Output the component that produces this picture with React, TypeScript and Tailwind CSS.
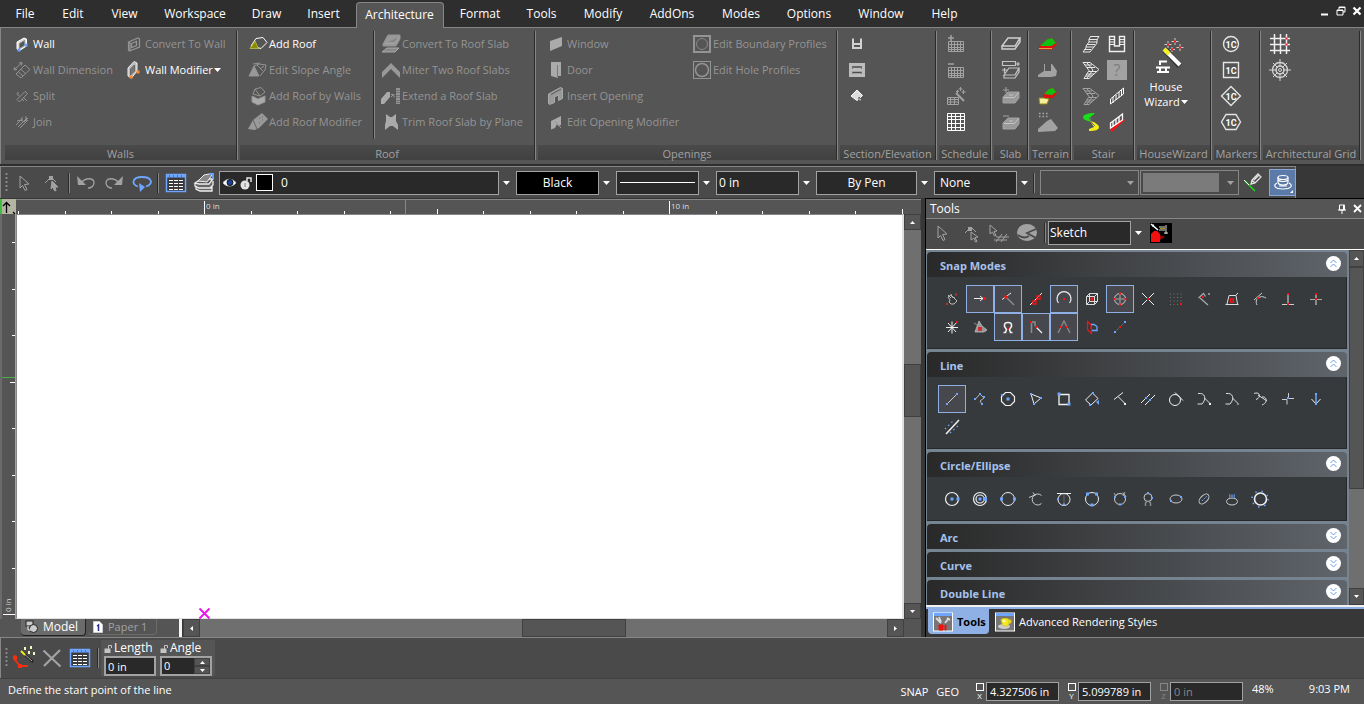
import type { ReactNode } from 'react';

const RED = '#ff1010';
const BLUE = '#6ea6ff';

type IconProps = { size?: number; box?: number; className?: string; children?: ReactNode };

const Icon = ({ size = 20, box = 20, className = '', children }: IconProps) => (
  <svg
    width={size}
    height={size}
    viewBox={`0 0 ${box} ${box}`}
    fill="none"
    stroke="currentColor"
    className={`shrink-0 ${className}`}
    aria-hidden="true"
  >
    {children}
  </svg>
);

const Dot = ({ x, y, c = RED, s = 2 }: { x: number; y: number; c?: string; s?: number }) => (
  <rect x={x - s / 2} y={y - s / 2} width={s} height={s} fill={c} stroke="none" />
);

const Caret = ({ className = 'text-white' }: { className?: string }) => (
  <svg width="7" height="4" viewBox="0 0 7 4" className={`shrink-0 ${className}`} aria-hidden="true">
    <path d="M0 0h7L3.5 4z" fill="currentColor" />
  </svg>
);

/* ---------- menu bar ---------- */

const menus = [
  { label: 'File', width: 'w-[50px]' },
  { label: 'Edit', width: 'w-[46px]' },
  { label: 'View', width: 'w-[57px]' },
  { label: 'Workspace', width: 'w-[84px]' },
  { label: 'Draw', width: 'w-[59px]' },
  { label: 'Insert', width: 'w-[55px]' },
  { label: 'Architecture', width: 'w-[97px]', active: true },
  { label: 'Format', width: 'w-[64px]' },
  { label: 'Tools', width: 'w-[59px]' },
  { label: 'Modify', width: 'w-[64px]' },
  { label: 'AddOns', width: 'w-[74px]' },
  { label: 'Modes', width: 'w-[64px]' },
  { label: 'Options', width: 'w-[72px]' },
  { label: 'Window', width: 'w-[72px]' },
  { label: 'Help', width: 'w-[55px]' },
];

const MenuBar = () => (
  <header className="flex h-[27px] bg-[#2e2e2e]">
    <nav className="flex">
      {menus.map((m) => (
        <div key={m.label} className={`flex shrink-0 justify-center ${m.width}`}>
          {m.active ? (
            <button className="relative mt-0.5 h-[26px] w-[88px] rounded-t-sm border border-b-0 border-[#868686] bg-[#555555] pb-0.5">
              {m.label}
            </button>
          ) : (
            <button className="h-full">{m.label}</button>
          )}
        </div>
      ))}
    </nav>
    <div className="ml-auto flex items-start gap-1.5 pt-1.5 pr-0.5 text-white">
      <button aria-label="Minimize">
        <Icon size={10} box={10}><path d="M1 8.5h7" strokeWidth="2" /></Icon>
      </button>
      <button aria-label="Restore">
        <Icon size={10} box={10}><path d="M3 3.5V1h6v5H7M1 4h6v5H1zM3 1.5h6M1 4.5h6" /></Icon>
      </button>
      <button aria-label="Close">
        <Icon size={10} box={10}><path d="M1.5 1.5l7 7M8.5 1.5l-7 7" strokeWidth="2.2" /></Icon>
      </button>
    </div>
  </header>
);

/* ---------- ribbon ---------- */

const wallIcons = {
  wall: (
    <Icon>
      <path d="M5 8l7-4 2.5 1v7l-7 4.5L5 15z" fill="#ddd" stroke="#fff" />
      <path d="M7.5 9.5l5-3v5l-5 3z" fill="#555" stroke="#888" />
      <Dot x={7} y={16} c={BLUE} s={3} /><Dot x={14} y={11} c={BLUE} s={3} />
    </Icon>
  ),
  dimension: (
    <Icon><path d="M2 10l8-7.5M2 10l3-.5M2 10l.5-3M10 2.5l-3 .5M10 2.5l-.5 3M4 14l9-9 5 4.5-9 8.5zM6.5 12l4.5 4M9 9.5l4.5 4" /></Icon>
  ),
  split: (
    <Icon><path d="M5 13.500l8-8 2.500 2-8 8.500zM4.500 8l3 2M5 6.500l2 1M12 12l3 3M10 13l2 2" /></Icon>
  ),
  join: (
    <Icon><path d="M4 13l6-6M6 15l9-9M8 16l8-8M5 9l4-1 3 2 4-4M10 5v4M14 4v5" /></Icon>
  ),
  convert: (
    <Icon><path d="M4.500 8l9.500-4 1.500 1v8l-10 4-1-1zM7.500 9.500l5-2v4l-5 2zM5 8l1 1v8" strokeWidth="1.200" /></Icon>
  ),
  modifier: (
    <Icon>
      <path d="M4 8l6-6.5 3 1.5v8L7.5 18 4 16z" fill="#bbb" stroke="#eee" />
      <path d="M6.5 9l4-4v6l-4 4z" fill="#777" stroke="#666" />
      <Dot x={7} y={17} c="#ff8a2a" s={3} /><Dot x={14} y={12} c="#ff8a2a" s={3} />
    </Icon>
  ),
};

const roofIcons = {
  add: (
    <Icon>
      <path d="M3 12L8 4.500l7-1 4 5-6 6z" stroke="#fff" />
      <path d="M2 14.500L7 7l3.500 7.500z" fill="#8b8b00" stroke="#d8d860" strokeWidth=".6" />
    </Icon>
  ),
  slope: (
    <Icon>
      <path d="M1 16L6 6l5 10z" fill="#999" />
      <path d="M6 6l5-2 7 1-1 5-5 6M9 5l6 6M12 9l4-3M5 4l7-1" />
    </Icon>
  ),
  walls: (
    <Icon>
      <path d="M4 10l6 3 7-3v6l-7 3-6-3z" fill="#aaa" />
      <path d="M5 8l2-5 6-1.5 4 4.5-5 4zM7 3l5 7" />
    </Icon>
  ),
  modifier: (
    <Icon>
      <path d="M0 17L5 8l9-7 6 6-9 9-4 2z" fill="#999" stroke="none" />
      <path d="M5 8l4 9M11 6h1m2 2h1m-4 3h1m2-6h1" stroke="#666" />
    </Icon>
  ),
  slab: (
    <Icon>
      <path d="M2 10L7 1h12v4l-4 7H2z" fill="#999" />
      <path d="M4 9h10l4-6M1 18l5-4h12l-4 4z" fill="#888" stroke="#aaa" />
    </Icon>
  ),
  miter: <Icon><path d="M1 12L10 3l9 9v6l-9-9-9 9z" fill="#999" stroke="none" /></Icon>,
  extend: (
    <Icon>
      <path d="M0 18v-5l6-7h3v5l-6 7z" fill="#aaa" stroke="none" />
      <path d="M10 8.500h3v3M10 11l2-2" />
      <path d="M17 2v16" strokeWidth="4" strokeDasharray="2 .5" />
    </Icon>
  ),
  trim: <Icon><path d="M5 2l4 3h2l4-3v7l2 4v5l-5-4h-3l-5 4v-5l1-4z" fill="#aaa" stroke="none" /></Icon>,
};

const openingIcons = {
  window: <Icon><path d="M4 7l12-4v9L4 17z" fill="#aaa" stroke="none" /></Icon>,
  door: <Icon><path d="M5 2h10v14h-3v2l-7-2z" fill="#aaa" stroke="none" /><path d="M11.5 5v12" stroke="#777" /></Icon>,
  insert: (
    <Icon>
      <path d="M2.500 8l12-6.500 2 1v10l-4 2V9l-4 2v5.500l-5 2-1-1z" fill="#999" stroke="#aaa" />
      <path d="M5 8.500l10-5.500" stroke="#555" />
    </Icon>
  ),
  edit: <Icon><path d="M5 9l10-5v9l-3 1-1-2-2 4-4 1.500z" fill="#aaa" stroke="none" /><path d="M9 9l6 7" stroke="#999" /></Icon>,
  boundary: <Icon><rect x="2" y="2" width="16" height="16" strokeWidth="2" /><circle cx="10" cy="10" r="5.5" strokeWidth=".8" /></Icon>,
  hole: <Icon><rect x="1.5" y="1.5" width="17" height="17" /><circle cx="10" cy="10" r="6.5" strokeWidth="1.5" /></Icon>,
};

const ToolItem = ({ icon, label, on, menu }: { icon: ReactNode; label: string; on?: boolean; menu?: boolean }) => (
  <button
    disabled={!on}
    className={`flex h-[26px] items-center gap-px whitespace-nowrap ${on ? 'text-white' : 'text-[#949494]'}`}
  >
    {icon}
    <span>{label}</span>
    {menu && <Caret />}
  </button>
);

const Group = ({ title, className, children }: { title: string; className: string; children: ReactNode }) => (
  <section className={`flex shrink-0 flex-col border-r border-[#868686] ${className}`}>
    <div className="flex flex-1 border-r border-[#2a2a2a]">{children}</div>
    <h2 className="ml-0.5 h-[15px] border-r border-[#2a2a2a] bg-linear-to-b from-[#4a4a4a] to-[#414141] text-center leading-[17px] whitespace-nowrap text-[#a2a2a2]">
      {title}
    </h2>
  </section>
);

const IconColumn = ({ icons }: { icons: { name: string; art: ReactNode }[] }) => (
  <div className="flex flex-col">
    {icons.map((i) => (
      <button key={i.name} aria-label={i.name} className="flex h-[26px] items-center">
        {i.art}
      </button>
    ))}
  </div>
);

const scheduleGrid = 'M2.500 7.500h15v10h-15zM2 10.500h16M2 13.500h16M2 15.500h16M5.500 7v11M8.500 7v11M11.500 7v11M14.500 7v11';

const sectionIcons = [
  { name: 'Section', art: <Icon className="text-[#d2d2d2]"><path d="M6 4.5V14h8V4.500M6 10h8" strokeWidth="2" /></Icon> },
  {
    name: 'Elevation',
    art: (
      <Icon>
        <rect x="2" y="3" width="16" height="14" fill="#bcbcbc" stroke="none" />
        <path d="M5 7h10M5 12.500h10" stroke="#4b4b4b" strokeWidth="1.500" />
        <path d="M5.500 7v2M14.500 7v2M5.500 12v2M14.500 12v2" stroke="#777" />
      </Icon>
    ),
  },
  { name: 'Update Section', art: <Icon><path d="M4 10l6-6 5.500 5.500-5.500 5z" fill="#ddd" stroke="#fff" /><path d="M12 11v4l3-.5z" fill="#fff" stroke="#555" /></Icon> },
];

const scheduleIcons = [
  { name: 'Add Schedule', art: <Icon className="text-[#a2a2a2]"><path d={scheduleGrid} /><path d="M5 1v6M2 4h6" strokeWidth="1.5" /></Icon> },
  { name: 'Remove Schedule', art: <Icon className="text-[#a2a2a2]"><path d={scheduleGrid} /><path d="M2 4h6" strokeWidth="1.5" /></Icon> },
  {
    name: 'Schedule Wizard',
    art: (
      <Icon className="text-[#a2a2a2]">
        <path d="M1.5 11.5h11v7h-11zM1.5 13.5h11M1.5 16h11M4.5 11v7M8.500 11v7M14.500 1v4M12.500 3h4M17.500 4v4M15.500 6h4M11.500 4v3M10 5.500h3" />
        <path d="M10 7l8 8" strokeWidth="2" />
      </Icon>
    ),
  },
  {
    name: 'Schedule Table',
    art: <Icon className="text-white"><path d="M1.5 1.5h17v17h-17zM1.5 4.5h17M1.5 7.500h17M1.5 11.5h17M1.5 15.500h17M5.5 1.5v17M9.500 1.5v17M14.5 1.5v17" /></Icon>,
  },
];

const slabIcons = [
  { name: 'Slab', art: <Icon className="text-[#d0d0d0]"><path d="M1 12l6-8h12l-5 8zM1 12v3h13l5-7V4" strokeWidth="1.400" /></Icon> },
  {
    name: 'Add Slab',
    art: <Icon className="text-[#c4c4c4]"><path d="M1.500 1.500h13v4h-13zM15 4h4M17 2v4M1 10h5M3.500 8v5M3 15l5-7h10l-4 7zM3 15v3h11l4-6V8" strokeWidth="1.200" /></Icon>,
  },
  { name: 'Add to Slab', art: <Icon className="text-[#a2a2a2]"><path d="M2 11l5-5h11v6l-4 5H2z" fill="#999" /><path d="M5 1v6M2 4h6" /><path d="M3 11.500h10.500l4-5M8 9h4" stroke="#c4c4c4" /></Icon> },
  { name: 'Subtract from Slab', art: <Icon className="text-[#a2a2a2]"><path d="M2 11l5-5h11v6l-4 5H2z" fill="#999" /><path d="M2 4h6" /><path d="M3 11.500h10.500l4-5M8 9h4" stroke="#c4c4c4" /></Icon> },
];

const terrainIcons = [
  {
    name: 'Terrain',
    art: (
      <Icon>
        <path d="M1 12.500l8-7 5-1.500 5 6-5 5.500H1z" fill="#e01010" stroke="none" />
        <path d="M2 12l7-6.500 5-1.500 4 5-4.500 3z" fill="#10c010" stroke="none" />
        <path d="M1 14.500h13" stroke="#e0a040" />
      </Icon>
    ),
  },
  { name: 'Terrain Pad', art: <Icon><path d="M0 15l6-4V4h1v7h6V4h1l5 7-1 5-5 1H0z" fill="#a2a2a2" stroke="none" /></Icon> },
  {
    name: 'Terrain Modify',
    art: (
      <Icon>
        <path d="M5 8.500L11 3l4-1 4 5-4 5H5z" fill="#e01010" stroke="none" />
        <path d="M6 8l5-5 4-1 3 4-4 3z" fill="#10c010" stroke="none" />
        <path d="M1 12h5l5 1-2 5H1.500z" fill="#f6ee9a" stroke="#8f8418" />
      </Icon>
    ),
  },
  {
    name: 'Terrain Points',
    art: <Icon><path d="M0 20v-3l9-8 4-2 7 9-3 3z" fill="#a2a2a2" stroke="none" /><path d="M1 1.5h9M1 4.5h9" stroke="#aaa" strokeDasharray="1.5 2" strokeWidth="1.5" /></Icon>,
  },
];

const landing = 'M2 2.500h7l9 7-10 9H3l5-8zM4 5h7M6 7.500h8M8 11.500h8M6 14h7M5 16h6M6 3l6 7-6 8';

const stairLeft = [
  {
    name: 'Straight Stair',
    art: <Icon className="text-[#e8e8e8]"><path d="M10 2.500h8M8 5.500h8M8 8h8M6 10.500h8M5 13h8M3 15.500h7M2 18h7M10 2L8 5v3l-3 4v2l-3 4M18 2l-2 4v3l-3 4-4 5" /></Icon>,
  },
  { name: 'L Stair', art: <Icon className="text-[#e8e8e8]"><path d={landing} /></Icon> },
  { name: 'Stair with Landing', art: <Icon className="text-[#a2a2a2]"><path d={landing} /></Icon> },
  {
    name: 'Spiral Stair',
    art: (
      <Icon>
        <path d="M14 1C8 1 3 2 2 5c0 3 5 4 8 5L8 6l4-3z" fill="#18e018" stroke="none" />
        <path d="M9 9c5 1 9 4 9 6 0 3-4 4-10 4v-2l5-2-2-3z" fill="#f2ee18" stroke="none" />
        <path d="M9 5l1 5 4 4" stroke="#777" />
      </Icon>
    ),
  },
];

const stairRight = [
  {
    name: 'U Stair',
    art: <Icon className="text-[#f0f0f0]"><path d="M2.500 2.500h5v9.500h5V2.500h5v15h-15z" strokeWidth="1.400" /><path d="M2 5.500h5M2 8h5M2 10.500h5M12.500 5.500h5M12.500 8h5M12.500 10.500h5" /></Icon>,
  },
  { name: 'Stair Help', art: <span className="flex size-5 items-center justify-center bg-[#a2a2a2] text-base text-[#7d7d7d]">?</span> },
  { name: 'Railing', art: <Icon className="text-white"><path d="M3.5 18v-5l13-11v6zM6 17v-6M9 14V9M12 12V6M14.5 10V4" /></Icon> },
  {
    name: 'Rail on Stair',
    art: <Icon className="text-white"><path d="M4 19L17 7" stroke={RED} strokeWidth="2.5" /><path d="M3.500 16v-5l12-9v6zM6 14V9M9 12V7M12 10V4" strokeWidth="1.300" /></Icon>,
  },
];

const Marker = ({ d }: { d: string }) => (
  <Icon size={22} box={22} className="font-['Roboto',sans-serif] text-[#e4e4e4]">
    <path d={d} strokeWidth="1.4" />
    <text x="11" y="14.5" textAnchor="middle" fontSize="9" fontWeight="bold" fill="#fff" stroke="none">1C</text>
  </Icon>
);

const markerIcons = [
  { name: 'Circle marker', art: <Marker d="M3.500 11a7.500 7.500 0 1 0 15 0a7.500 7.500 0 1 0-15 0" /> },
  { name: 'Square marker', art: <Marker d="M3.5 3.5h15v15h-15z" /> },
  { name: 'Diamond marker', art: <Marker d="M11 1.5l9.5 9.5-9.5 9.5L1.5 11z" /> },
  { name: 'Hexagon marker', art: <Marker d="M6 3.5h10l4.5 7.5-4.5 7.5H6L1.5 11z" /> },
];

const gridIcons = [
  {
    name: 'Rectangular grid',
    art: (
      <Icon size={22} box={22} className="text-[#f0f0f0]">
        <path d="M5.5 1v20M11.500 1v20M17.500 1v20M1 5.5h20M1 11.500h20M1 17.500h20" strokeWidth="1.500" />
        <Dot x={17.5} y={5.5} />
        <Dot x={17.5} y={11.5} />
      </Icon>
    ),
  },
  {
    name: 'Radial grid',
    art: (
      <Icon size={22} box={22} className="text-[#d4d4d4]">
        <circle cx="11" cy="11" r="7.5" strokeWidth="1.3" />
        <circle cx="11" cy="11" r="4" strokeWidth="1.4" />
        <circle cx="11" cy="11" r="1.500" />
        <path d="M11 0v8M11 14v8M0 11h8M14 11h8M4 4l5 5M18 4l-5 5M4 18l5-5M18 18l-5-5" />
      </Icon>
    ),
  },
];

const Ribbon = () => (
  <div className="flex h-[137px] shrink-0 overflow-hidden border-t border-l border-[#868686] bg-[#555555] pt-[3px] pb-1 pl-0.5 text-[11px]">
    <Group title="Walls" className="w-[235px]">
      <div className="w-[112px] pl-[9px]">
        <ToolItem icon={wallIcons.wall} label="Wall" on />
        <ToolItem icon={wallIcons.dimension} label="Wall Dimension" />
        <ToolItem icon={wallIcons.split} label="Split" />
        <ToolItem icon={wallIcons.join} label="Join" />
      </div>
      <div className="pl-[9px]">
        <ToolItem icon={wallIcons.convert} label="Convert To Wall" />
        <ToolItem icon={wallIcons.modifier} label="Wall Modifier" on menu />
      </div>
    </Group>
    <Group title="Roof" className="w-[298px]">
      <div className="mb-1.5 w-[136px] border-r border-[#2a2a2a] pl-[10px]">
        <ToolItem icon={roofIcons.add} label="Add Roof" on />
        <ToolItem icon={roofIcons.slope} label="Edit Slope Angle" />
        <ToolItem icon={roofIcons.walls} label="Add Roof by Walls" />
        <ToolItem icon={roofIcons.modifier} label="Add Roof Modifier" />
      </div>
      <div className="mb-1.5 border-l border-[#868686] pl-[6px]">
        <ToolItem icon={roofIcons.slab} label="Convert To Roof Slab" />
        <ToolItem icon={roofIcons.miter} label="Miter Two Roof Slabs" />
        <ToolItem icon={roofIcons.extend} label="Extend a Roof Slab" />
        <ToolItem icon={roofIcons.trim} label="Trim Roof Slab by Plane" />
      </div>
    </Group>
    <Group title="Openings" className="w-[302px]">
      <div className="w-[146px] pl-[10px]">
        <ToolItem icon={openingIcons.window} label="Window" />
        <ToolItem icon={openingIcons.door} label="Door" />
        <ToolItem icon={openingIcons.insert} label="Insert Opening" />
        <ToolItem icon={openingIcons.edit} label="Edit Opening Modifier" />
      </div>
      <div className="pl-[10px]">
        <ToolItem icon={openingIcons.boundary} label="Edit Boundary Profiles" />
        <ToolItem icon={openingIcons.hole} label="Edit Hole Profiles" />
      </div>
    </Group>
    <Group title="Section/Elevation" className="w-[99px]">
      <div className="pl-[9px]"><IconColumn icons={sectionIcons} /></div>
    </Group>
    <Group title="Schedule" className="w-[55px]">
      <div className="pl-[9px]"><IconColumn icons={scheduleIcons} /></div>
    </Group>
    <Group title="Slab" className="w-[37px]">
      <div className="pl-[9px]"><IconColumn icons={slabIcons} /></div>
    </Group>
    <Group title="Terrain" className="w-[43px]">
      <div className="pl-[9px]"><IconColumn icons={terrainIcons} /></div>
    </Group>
    <Group title="Stair" className="w-[63px]">
      <div className="flex gap-1.5 pl-[9px]">
        <IconColumn icons={stairLeft} />
        <IconColumn icons={stairRight} />
      </div>
    </Group>
    <Group title="HouseWizard" className="w-[77px]">
      <button className="flex h-[80px] w-[62px] flex-col items-center text-white">
        <Icon size={44} box={44} className="mt-1 ml-2">
          <path d="M17 15l15 16" stroke="#333" strokeWidth="6" />
          <path d="M17 15l15 15" stroke="#fff" strokeWidth="4" />
          <path d="M16 14l5 5" stroke="#f4f020" strokeWidth="4" />
          <path d="M11 26.500h8M8 32.500h14M12 26v4M9 37h12M12 32v5M18 32v5" stroke="#fff" strokeWidth="2" />
          <path d="M20 6v7M16.500 9.500h7M27 3v7M23.500 6.500h7M32 9v7M28.500 12.500h7M24 12v5M22 14.500h5" stroke="#ccc" />
          <Dot x={20} y={9.5} /><Dot x={27} y={6.5} /><Dot x={32} y={12.5} /><Dot x={24} y={14.5} />
        </Icon>
        <span className="flex flex-col items-center leading-[15px]">
          <span>House</span>
          <span className="flex items-center gap-px">Wizard<Caret /></span>
        </span>
      </button>
    </Group>
    <Group title="Markers" className="w-[49px]">
      <div className="pl-[8px]"><IconColumn icons={markerIcons} /></div>
    </Group>
    <Group title="Architectural Grid" className="w-[100px]">
      <div className="pl-[8px]"><IconColumn icons={gridIcons} /></div>
    </Group>
  </div>
);

/* ---------- property toolbar ---------- */

const pointer = 'M6 3l9 8-4.5.5 2.5 5-2 1-2.5-5L6 15z';

const Grip = () => (
  <svg width="3" height="22" className="shrink-0" aria-hidden="true">
    <path d="M1.5 1v20" stroke="#868686" strokeWidth="2" strokeDasharray="2 2" />
  </svg>
);

const Divider = () => <div className="h-5 w-0.5 shrink-0 border-r border-l border-r-[#868686] border-l-[#2a2a2a]" />;

const TableIcon = () => (
  <Icon size={22} box={22}>
    <rect x="1.5" y="2.5" width="19" height="17" stroke={BLUE} strokeWidth="1.5" fill="#3a3a3a" />
    <path d="M1 4h20" stroke={BLUE} strokeWidth="3" />
    <path d="M4 8.500h4M9 8.500h4M14 8.500h4M4 11.500h4M9 11.500h4M14 11.500h4M4 14.500h4M9 14.500h4M14 14.500h4M4 17.5h4M9 17.5h4M14 17.5h4" stroke="#fff" />
    <path d="M4 4h1M8 4h1M12 4h1M16 4h1" stroke="#2a4a80" />
  </Icon>
);

type ComboProps = { label: string; value: string; className: string; selectClass?: string; children?: ReactNode };

const Combo = ({ label, value, className, selectClass = 'pl-0.5', children }: ComboProps) => (
  <div className="flex shrink-0 items-center gap-1">
    <div className={`flex h-6 items-center border border-[#a2a2a2] bg-[#292929] ${className}`}>
      {children}
      <select aria-label={label} className={`h-full min-w-0 flex-1 appearance-none text-white outline-none ${selectClass}`}>
        <option>{value}</option>
      </select>
    </div>
    <Caret />
  </div>
);

const PropertyBar = () => (
  <div className="flex h-8 shrink-0 overflow-hidden bg-[#373737]">
    <div className="flex w-[1296px] shrink-0 items-center border-t border-r border-l border-[#868686] bg-[#4a4a4a] pl-1">
      <Grip />
      <button aria-label="Select" className="ml-1.5 text-[#a2a2a2]"><Icon><path d={pointer} /></Icon></button>
      <button aria-label="Edit node" className="ml-2 text-[#a2a2a2]">
        <Icon><path d="M3 10l6-6 5 5" /><Dot x={9} y={5} c="#a2a2a2" s={4} /><path d="M10 8l6 6h-3l1 4-2-1-1-3-2 2z" fill="#a2a2a2" /></Icon>
      </button>
      <div className="ml-1.5"><Divider /></div>
      <button aria-label="Undo" className="ml-1.5 text-[#a2a2a2]">
        <Icon><path d="M6 9c3-4 12-5 12 1 0 3-3 5-6 5" strokeWidth="1.3" /><path d="M1 3l1 9h8z" fill="currentColor" stroke="none" /></Icon>
      </button>
      <button aria-label="Redo" className="ml-2 text-[#a2a2a2]">
        <Icon><path d="M14 9c-3-4-12-5-12 1 0 3 3 5 6 5" strokeWidth="1.3" /><path d="M19 3l-1 9h-8z" fill="currentColor" stroke="none" /></Icon>
      </button>
      <button aria-label="Repeat" className="ml-2">
        <Icon><path d="M6 13.500c-7-2-6-9.500 4-9.500s12 7 4 9.500" stroke={BLUE} strokeWidth="1.800" /><path d="M7 10l6 4-5 5z" fill={BLUE} stroke="none" /></Icon>
      </button>
      <div className="ml-[5px]"><Divider /></div>
      <button aria-label="Properties table" className="ml-1.5"><TableIcon /></button>
      <button aria-label="Layers" className="ml-1.5">
        <Icon size={22} box={22}>
          <path d="M2 11l6-4h12l-4 5H6zM2 11v3l4 2h11l3-3v-4M3 14v3l4 2h12v-5M6 16h13" fill="#666" stroke="#eee" strokeWidth="1.3" />
          <path d="M5 9l6-6 5-1 3 1-5 7z" fill="#888" stroke="#eee" />
          <path d="M16 2h4v5" stroke={BLUE} strokeWidth="1.8" />
        </Icon>
      </button>
      <div className="ml-1">
        <Combo label="Layer" value="0" className="w-[280px] pl-0.5" selectClass="pl-2">
          <Icon size={16} box={16}>
            <path d="M1 8c3-5 10-5 13 0-3 4-10 4-13 0z" fill="#fff" stroke="#bbb" />
            <circle cx="8" cy="7.5" r="3" fill="#1c3f9c" stroke="#111" />
          </Icon>
          <Icon size={16} box={16} className="ml-px">
            <circle cx="6" cy="10" r="4.5" fill="#e4e4e4" stroke="none" />
            <path d="M8 6V3h4v4" stroke="#e4e4e4" strokeWidth="1.5" />
            <path d="M6 8v4" stroke="#777" />
          </Icon>
          <span className="ml-px size-[17px] shrink-0 border border-white bg-black" />
        </Combo>
      </div>
      <div className="ml-1.5 flex gap-1.5">
        <Combo label="Color" value="Black" className="w-[83px]" selectClass="bg-black text-center" />
        <div className="flex shrink-0 items-center gap-1">
          <div className="grid h-6 w-[83px] items-center border border-[#a2a2a2] bg-[#292929]">
            <select aria-label="Line style" className="col-start-1 row-start-1 h-full appearance-none outline-none">
              <option></option>
            </select>
            <span className="pointer-events-none col-start-1 row-start-1 mx-[3px] h-px bg-white" />
          </div>
          <Caret />
        </div>
        <Combo label="Line width" value="0 in" className="w-[83px]" />
        <Combo label="Pen" value="By Pen" className="w-[101px]" selectClass="text-center" />
        <Combo label="Brush" value="None" className="w-[83px]" selectClass="pl-[5px]" />
      </div>
      <div className="ml-[5px]"><Divider /></div>
      <div className="ml-[5px] flex h-[25px] w-[99px] shrink-0 items-center border border-[#868686] pr-1">
        <select aria-label="Filter" disabled className="h-full flex-1 appearance-none"><option></option></select>
        <Caret className="text-[#a2a2a2]" />
      </div>
      <div className="ml-px flex h-[25px] w-[99px] shrink-0 items-center justify-between border border-[#868686] pr-1 pl-0.5">
        <select aria-label="Filter value" disabled className="h-[19px] w-[76px] appearance-none bg-[#7b7b7b]"><option></option></select>
        <Caret className="text-[#a2a2a2]" />
      </div>
      <button aria-label="Pencil" className="ml-1">
        <Icon size={22} box={22}>
          <path d="M2 9l10 10" stroke="#10e010" strokeWidth="1.5" />
          <path d="M1 8l5 5" stroke="#fff" />
          <path d="M8 12l1-4 6-6 3 3-6 6zM11 8l5-5M9 8l3 3" stroke="#e4e4e4" strokeWidth="1.3" />
        </Icon>
      </button>
      <button aria-label="Render" className="ml-1 flex size-[27px] shrink-0 items-center justify-center border border-[#8aa6d6] bg-[#5c7aa8]">
        <Icon>
          <ellipse cx="10" cy="4.500" rx="5" ry="2" stroke="#fff" strokeWidth="1.200" />
          <path d="M5 4.500V9c0 4 10 4 10 0V4.500M5 7c2 2 8 2 10 0M4 10c-4 2-3 6 6 6s10-4 6-6M6 13h8" stroke="#fff" strokeWidth="1.200" />
          <path d="M17 20h3v-3z" fill="#fff" stroke="none" />
        </Icon>
      </button>
    </div>
  </div>
);

/* ---------- drawing area ---------- */

const STEP = 46.5;

const HorizontalRuler = () => (
  <svg className="block h-[15px] w-full border-t border-[#868686] bg-[#555555]" aria-hidden="true">
    {Array.from({ length: 30 }, (_, i) => i - 4).map((i) => {
      const x = Math.round(204 - 16 + i * STEP);
      const top = i % 10 === 0 ? 1 : i % 5 === 0 ? 9 : 11;
      return <path key={i} d={`M${x + 0.5} ${top}V14`} stroke="#fff" />;
    })}
    <text x="190" y="9" fontSize="8" fill="#ddd">0 in</text>
    <text x="655" y="9" fontSize="8" fill="#ddd">10 in</text>
    <path d="M389.5 0V14" stroke="#4fae4f" />
  </svg>
);

const VerticalRuler = () => (
  <svg className="h-full w-4 shrink-0 border-r border-l-2 border-r-[#a2a2a2] border-l-[#6b6b6b] bg-[#555555]" aria-hidden="true">
    {Array.from({ length: 9 }, (_, i) => i).map((i) => {
      const y = Math.round(400 - i * STEP);
      const left = i === 0 ? 1 : i % 5 === 0 ? 8 : 10;
      return <path key={i} d={`M${left} ${y + 0.5}H13`} stroke="#fff" />;
    })}
    <path d="M0 163.5H13" stroke="#4fae4f" />
    <text transform="translate(9 398) rotate(-90)" fontSize="8" fill="#ddd">0 in</text>
  </svg>
);

const ScrollButton = ({ label, d, className = '' }: { label: string; d: string; className?: string }) => (
  <button aria-label={label} className={`flex shrink-0 items-center justify-center border border-[#404040] bg-[#555555] text-white ${className}`}>
    <svg width="5" height="5" viewBox="0 0 5 5" aria-hidden="true"><path d={d} fill="currentColor" /></svg>
  </button>
);

const UP = 'M0 4h5L2.5 1z';
const DOWN = 'M0 1h5L2.5 4z';
const LEFT = 'M4 0v5L1 2.5z';
const RIGHT = 'M1 0v5l3-2.5z';

const DrawingArea = () => (
  <div className="flex min-w-0 flex-1 flex-col bg-[#555555]">
    <div className="flex border-t border-[#373737]">
      <div className="flex h-[15px] w-4 shrink-0 items-center justify-center border-l-2 border-[#3fbf3f] bg-[#b4b4a2] text-black">
        <Icon size={14} box={14}><path d="M4.5 3v10M1 6l3.5-3.5L8 6M11 12l2 2" strokeWidth="1.3" /></Icon>
      </div>
      <HorizontalRuler />
      <div className="w-1 shrink-0 bg-[#373737]" />
    </div>
    <div className="flex min-h-0 flex-1">
      <VerticalRuler />
      <main className="relative flex-1 border-t border-r-2 border-b border-l border-t-[#868686] border-r-[#e0e0e0] border-b-[#e0e0e0] border-l-[#868686] bg-white">
        <svg width="11" height="11" className="absolute bottom-[-1px] left-[182px]" aria-label="Origin">
          <path d="M0.5 0.5l10 10M10.5 0.5l-10 10" stroke="#e818e8" strokeWidth="2" />
        </svg>
      </main>
      <div className="flex w-[17px] shrink-0 flex-col bg-[#6f6f6f]">
        <ScrollButton label="Scroll up" d={UP} className="h-4" />
        <div className="mt-[134px] h-[53px] border border-[#404040] bg-[#555555]" />
        <ScrollButton label="Scroll down" d={DOWN} className="mt-auto h-4" />
      </div>
      <div className="w-1 shrink-0 bg-[#373737]" />
    </div>
    <div className="flex h-[18px] shrink-0">
      <div className="flex w-[179px] shrink-0 gap-0.5 pl-[21px]">
        <button className="flex h-[17px] w-[65px] items-center gap-1 rounded-b border-r border-b border-[#222222] bg-[#6b6b6b] pl-1 leading-4 text-white">
          <Icon size={14} box={14}>
            <rect x="1" y="1" width="7" height="5" fill="#ccc" stroke="#222" />
            <circle cx="8.5" cy="8.5" r="4" fill="#ccc" stroke="#222" />
            <path d="M3 6v4h3" stroke="#eee" />
          </Icon>
          Model
        </button>
        <button className="flex h-4 w-[69px] items-center gap-1 rounded-b border-r border-b border-[#6b6b6b] pl-1 text-[11px] leading-4 text-[#a2a2a2]">
          <Icon size={12} box={12}>
            <path d="M1.5.5h6l3 3v8h-9z" fill="#fff" stroke="#ccc" />
            <path d="M5 5l1.5-1v6" stroke="#2a2a90" strokeWidth="1.5" />
          </Icon>
          <span>Paper 1</span>
        </button>
      </div>
      <div className="w-[3px] shrink-0 bg-[#f4f4f4]" />
      <div className="flex flex-1 border-l border-[#373737] bg-[#6f6f6f]">
        <ScrollButton label="Scroll left" d={LEFT} className="w-[17px]" />
        <div className="ml-[322px] w-[104px] border border-[#404040] bg-[#555555]" />
        <ScrollButton label="Scroll right" d={RIGHT} className="ml-auto w-[17px]" />
      </div>
      <div className="w-[17px] shrink-0 bg-[#555555]" />
      <div className="w-1 shrink-0 bg-[#373737]" />
    </div>
  </div>
);

/* ---------- tools palette ---------- */

type Tool = { name: string; on?: boolean; art: ReactNode };

const W = '#f0f0f0';
const G = '#8c8c8c';

const snapTools: Tool[] = [
  { name: 'No Snap', art: <><path d="M10 12l3-2 6 6-3 3-3 0-2-2 1-2zM10 10l3 3M13 9l1 3 3 1" stroke="#bbb" /><Dot x={18} y={9.5} c="#c03030" /><Dot x={9} y={19} c="#c03030" /></> },
  { name: 'Vertex', on: true, art: <><path d="M8 13.500h9M14 11l3 2.500-3 2.500" stroke={W} /><Dot x={18.5} y={13.5} s={3} /></> },
  { name: 'Nearest', on: true, art: <><path d="M17 8l-9 6.500" stroke={W} /><path d="M12 12l8 8" stroke={G} strokeWidth="1.5" /><Dot x={12} y={12} s={3} /></> },
  { name: 'Middle', art: <><path d="M8 20L20 8" stroke={W} /><path d="M11 16h3v3h-3zM15 11h3v3h-3z" stroke={RED} strokeWidth="1.300" /><path d="M14 15l2-2" stroke={RED} /></> },
  { name: 'Arc Center', on: true, art: <><path d="M8.500 18a7 7 0 1 1 11 0" stroke={W} strokeWidth="1.200" /><Dot x={14} y={14} /></> },
  { name: 'Extents Center', art: <><path d="M8.5 11.5h8v8h-8zM11.5 8.5h8v8h-8zM8.5 11.5l3-3M16.5 11.5l3-3M8.5 19.5l3-3M16.5 19.5l3-3" stroke="#ddd" /><Dot x={14} y={14} s={3} /></> },
  { name: 'Quadrant', on: true, art: <><circle cx="14" cy="14" r="5.5" stroke="#ccc" /><path d="M8 14h12M14 8v12" stroke={G} strokeWidth="1.5" /><Dot x={14} y={8.5} /><Dot x={14} y={19.5} /><Dot x={8.5} y={14} /><Dot x={19.5} y={14} /></> },
  { name: 'Intersection', art: <><path d="M8 8l12 12M20 8L8 20" stroke={W} /><Dot x={14} y={14} /></> },
  { name: 'Grid', art: <><path d="M8 9h12M8 12.5h12M8 16h12M8 19.5h9" stroke="#777" strokeDasharray="1 2.5" /><Dot x={19} y={19} /></> },
  { name: 'Projection', art: <><path d="M8.500 13l5-4.500 2 3M10 13l8 7" stroke="#aaa" strokeWidth="1.200" /><Dot x={13} y={12} /><Dot x={19} y={9} c={G} s={2} /></> },
  { name: 'Face', art: <><path d="M7.5 19.5h13M9 19l2-8.5h7l1.5 8.5M18 10l2-2" stroke="#ddd" /><path d="M12.500 14h3v3h-3z" stroke={RED} strokeWidth="1.300" /></> },
  { name: 'Tangent', art: <><path d="M11 20c-2-4 0-7 3-8 2-1 4 0 6 1M8 15l8-7" stroke="#ccc" /><Dot x={12} y={13} /></> },
  { name: 'Perpendicular', art: <><path d="M8 19.5h12" stroke="#ccc" /><path d="M14 8v12" stroke={G} strokeWidth="2" /><Dot x={14} y={9} /><Dot x={14} y={19} /></> },
  { name: 'Opposite', art: <><path d="M14 8v12" stroke={G} strokeWidth="2" /><path d="M8 14.5h12" stroke="#aaa" /><Dot x={14} y={9} /><Dot x={14} y={14} /></> },
  { name: 'Magnetic Point', art: <><path d="M8 14.500h12M14 8.500v12M10 10l8 9M10 19l9-10" stroke={W} /><Dot x={19} y={9} /></> },
  { name: 'Facet', art: <><path d="M9 19l4-11 3 5 5 4-3 2z" fill="#999" stroke="#bbb" strokeWidth=".8" /><path d="M8 10l3 2" stroke={G} /><Dot x={14} y={16} s={4} c="#d03030" /></> },
  { name: 'Magnet', on: true, art: <><path d="M9.5 19.500h2l1-3-2-3C10 10 12 9.500 14 9.500s4 .5 3.500 4l-2 3 1 3h2" stroke={W} strokeWidth="1.600" /><Dot x={14} y={15.5} /></> },
  { name: 'Ortho', on: true, art: <><path d="M9.5 8v12M9 9h4v4" stroke={G} strokeWidth="1.5" /><path d="M14 14l6 6" stroke={W} strokeWidth="1.200" /><Dot x={9} y={9} /><Dot x={14} y={14} /></> },
  { name: 'Show Magnetic Point', on: true, art: <><path d="M8 20l6-12 6 12" stroke={G} strokeWidth="1.3" /><Dot x={11} y={14} /><Dot x={17} y={14} /></> },
  { name: 'Workplane', art: <><path d="M9.5 8.500v8l4 4v-8z" stroke={RED} strokeWidth="1.2" /><path d="M13 11.500h3l3 2v4h-5" stroke={BLUE} strokeWidth="1.3" /><path d="M13 13v3" stroke={RED} /></> },
  { name: 'Divide', art: <><path d="M9 19L19 9" stroke="#777" strokeDasharray="2 1" /><Dot x={9} y={19} c={BLUE} /><Dot x={19} y={9} c={BLUE} /><Dot x={14} y={14} /></> },
];

const Blue = ({ x, y, s = 2 }: { x: number; y: number; s?: number }) => <Dot x={x} y={y} c={BLUE} s={s} />;

const lineTools: Tool[] = [
  { name: 'Line', on: true, art: <><path d="M9 19L19 9" stroke="#ccc" /><Blue x={9} y={19} /><Blue x={19} y={9} /></> },
  { name: 'Polyline', art: <><path d="M9.500 14l4.500-5 4 4-4 3 2 3" stroke="#bbb" /><Blue x={9} y={14} /><Blue x={14} y={9} /><Blue x={18} y={12} /><Blue x={16} y={19} /></> },
  { name: 'Polygon', art: <><path d="M11.500 7.5h5l4 4v5l-4 4h-5l-4-4v-5z" stroke={W} strokeWidth="1.2" /><Blue x={14} y={14} s={3} /><Blue x={8} y={10} /></> },
  { name: 'Irregular Polygon', art: <><path d="M9 9l10 4-7 6z" stroke={W} /><Blue x={9} y={9} /><Blue x={19} y={13} /><Blue x={12} y={19} /></> },
  { name: 'Rectangle', art: <><path d="M9 9.5h10v10H9z" stroke={W} strokeWidth="1.3" /><Blue x={9} y={9} s={3} /><Blue x={19} y={19} s={3} /></> },
  { name: 'Rotated Rectangle', art: <><path d="M7.5 15l7-7 5.500 5.500-7 6.500z" stroke={W} /><Blue x={15} y={8} /><Blue x={12} y={20} /><path d="M21 15v5l-3-3z" fill={BLUE} stroke="none" /></> },
  { name: 'Perpendicular Line', art: <><path d="M8 14.500l9-7M12.500 12l7 7" stroke={W} /><Dot x={19} y={19} c={W} /></> },
  { name: 'Parallel', art: <><path d="M7 18l9-9M11 20l10-10" stroke={W} /><Blue x={12} y={13} /><Blue x={16} y={15} /></> },
  { name: 'Tangent to Arc', art: <><circle cx="13" cy="15" r="5.500" stroke={W} /><path d="M13 7.500l8 8" stroke={W} /></> },
  { name: 'Tangent from Arc', art: <><path d="M8 8.500c7-1 9 5 4 10.500H7.500M14.500 13l6 6" stroke="#ddd" /><Dot x={20} y={19} c={W} /></> },
  { name: 'Tangent to Point', art: <><path d="M8 8.500c7-1 9 5 4 10.500H7.500M14.500 13l6 6" stroke="#ddd" /><Dot x={20} y={19} c={G} /></> },
  { name: 'Tangent to Two Arcs', art: <><path d="M8 8.500c5-2 7 2 4 5l-2 1M12 10l9 6M16 12c5-1 6 6 0 8" stroke="#ddd" /></> },
  { name: 'Minimal Distance', art: <><path d="M14.5 8v6M14 13.500h6M8 14.500h5v5" stroke="#ccc" /><Blue x={14} y={13} /></> },
  { name: 'Axis Line', art: <><path d="M14 8v11" stroke={BLUE} strokeWidth="1.5" /><path d="M9.500 14l4.500 5 4.500-5" stroke={W} /><Blue x={14} y={9} /><Blue x={14} y={19} /></> },
  { name: 'Construction', art: <><path d="M8 21L21 7" stroke={W} strokeWidth="1.500" /><path d="M7 16L16 7M12 20l9-8" stroke={BLUE} strokeWidth="1.2" strokeDasharray="1.5 3" /></> },
];

const circleTools: Tool[] = [
  { name: 'Center and Point', art: <><circle cx="14" cy="14" r="6.5" stroke={W} strokeWidth="1.2" /><Blue x={14} y={14} s={3} /><Blue x={20} y={14} s={3} /></> },
  { name: 'Concentric', art: <><circle cx="14" cy="14" r="6.5" stroke={W} strokeWidth="1.2" /><circle cx="14" cy="14" r="4" stroke={W} strokeWidth="1.2" /><Blue x={14} y={14} s={3} /><Blue x={19} y={14} s={4} /></> },
  { name: 'Double Point', art: <><circle cx="14" cy="14" r="6.5" stroke={W} /><Blue x={7.5} y={14} s={3} /><Blue x={20.5} y={14} s={3} /></> },
  { name: 'Tangent to Arc or Line', art: <><path d="M19.500 10.500a5.500 5.500 0 1 0 0 8M7 12.500l7-3M11 7.500l2 3" stroke="#ccc" /></> },
  { name: 'Tangent to Line', art: <><path d="M7 8.5h14" stroke={W} /><circle cx="14" cy="14.500" r="6" stroke={W} /><path d="M14 9v10" stroke="#666" /><Blue x={14} y={19.5} /><Blue x={8} y={14} /></> },
  { name: 'Triple Point', art: <><circle cx="14" cy="14" r="6.5" stroke={W} /><Blue x={9.5} y={9} s={3} /><Blue x={18.5} y={9} s={3} /><Blue x={14} y={20} s={3} /></> },
  { name: 'Tangent to 3 Arcs', art: <><circle cx="14" cy="14" r="5.500" stroke="#ccc" /><path d="M8 11.500l4-3M17 7.500l3 4M8 8l2 3M19 7l-2 4" stroke="#aaa" /><Blue x={9} y={12} /><Blue x={19} y={12} /><Blue x={14} y={19.5} /></> },
  { name: 'Tangent to Entities', art: <><circle cx="14" cy="12.5" r="4" stroke="#ccc" /><path d="M11.500 21v-3l2-2M16.500 21v-3l-2-2" stroke={G} strokeWidth="1.5" /><Blue x={14} y={8} /><Blue x={18} y={13} /></> },
  { name: 'Ellipse', art: <><ellipse cx="14" cy="14" rx="6" ry="4" stroke="#ccc" /><Blue x={9} y={16} /><Blue x={19} y={12} /></> },
  { name: 'Rotated Ellipse', art: <><ellipse cx="14" cy="14" rx="6" ry="3.5" transform="rotate(-45 14 14)" stroke="#ccc" /><path d="M12 16l5-5" stroke={BLUE} strokeDasharray="2 1" /></> },
  { name: 'Fixed Ratio', art: <><ellipse cx="14" cy="16.500" rx="5.500" ry="3.500" stroke="#ccc" /><path d="M11.500 9v4M14 9v4M16.500 9v4M11 11h6" stroke="#5a86c8" /></> },
  { name: 'Circle Fit', art: <><circle cx="14.5" cy="14" r="6" stroke={W} strokeWidth="1.6" /><circle cx="14" cy="14" r="8" stroke={BLUE} strokeDasharray="1.5 5" strokeWidth="1.5" /></> },
];

const ToolSection = ({ title, tools }: { title: string; tools?: Tool[] }) => (
  <section className="shrink-0">
    <h3>
      <button
        aria-expanded={!!tools}
        className="flex h-[25px] w-full justify-between rounded-t bg-linear-to-r from-[#292929] to-[#60656b] pr-1.5 pl-[13px] font-bold text-[#a6c2ec]"
      >
        <span className="pt-1.5">{title}</span>
        <span className="mt-1 flex size-[15px] items-center justify-center rounded-full bg-white text-[#6f9fe0]">
          <Icon size={9} box={9}>
            {tools ? <path d="M1.5 4l3-3 3 3M1.5 8l3-3 3 3" /> : <path d="M1.5 1l3 3 3-3M1.5 5l3 3 3-3" />}
          </Icon>
        </span>
      </button>
    </h3>
    {tools && (
      <div className="flex flex-wrap border-r border-b border-[#262829] bg-[#363a3d] pt-2 pb-[7px] pl-[11px]">
        {tools.map((t) => (
          <button
            key={t.name}
            aria-label={t.name}
            className={`size-7 border ${t.on ? 'border-[#8fb0e4] bg-[#46484e]' : 'border-transparent'}`}
          >
            <Icon size={28} box={28} className="-m-px">{t.art}</Icon>
          </button>
        ))}
      </div>
    )}
  </section>
);

const ToolsPanel = () => (
  <aside className="flex w-[439px] shrink-0 flex-col border-t border-l border-black bg-[#373737] text-[11px]">
    <div className="flex h-[19px] shrink-0 items-center bg-[#555555] pr-0.5 pl-1">
      <h2 className="text-[12px]">Tools</h2>
      <button aria-label="Pin" className="ml-auto">
        <Icon size={10} box={10}><path d="M2.500 1h5v5h-5zM1 6h8M5 6v4M6.500 1v5" /></Icon>
      </button>
      <button aria-label="Close panel" className="ml-1.5">
        <Icon size={9} box={9}><path d="M1 1l7 7M8 1l-7 7" strokeWidth="1.8" /></Icon>
      </button>
    </div>
    <div className="flex h-[31px] shrink-0 items-center border-t border-[#868686] bg-[#4a4a4a] pb-0.5 pl-1.5 text-[12px] text-[#a2a2a2]">
      <button aria-label="Select"><Icon><path d={pointer} /></Icon></button>
      <button aria-label="Node edit" className="ml-2.5">
        <Icon><path d="M3 10l6-6 5 5" /><Dot x={8} y={6} c="#a2a2a2" s={4} /><path d="M9 9l7 5-3 .5 2 4-1.5.5-1.5-4-3 2z" /></Icon>
      </button>
      <button aria-label="Select by plane" className="ml-1.5">
        <Icon size={22} box={22}><path d="M2 3l7 6-3 .5 2 4-1.5.5-2-4-2.5 2zM8 20l6-8M13 20l6-8M8 15h13M6 18h13" /></Icon>
      </button>
      <button aria-label="Select 3D" className="ml-1.5">
        <Icon size={22} box={22}>
          <ellipse cx="11" cy="10.500" rx="10" ry="8.500" fill="#a2a2a2" stroke="none" />
          <path d="M20 7l-9 4 9 5M2 13c4 3 8 3 11 1" stroke="#4a4a4a" strokeWidth="1.800" />
        </Icon>
      </button>
      <div className="mr-0.5 ml-1.5"><Divider /></div>
      <Combo label="Palette" value="Sketch" className="w-[83px]" selectClass="pl-px" />
      <button aria-label="Toolbox" className="ml-2">
        <Icon size={22} box={22}>
          <path d="M0 1h22v20H0z" fill="#000" stroke="none" />
          <path d="M1 12l3-3h3l3 3v8H1z" fill="#f01010" stroke="none" />
          <path d="M1 2l7 6M4 3l-2 1" stroke="#fff" strokeWidth="1.600" />
          <path d="M9 5h6M9 8h6M14 11h4M16 3v9" stroke="#ddd" />
          <path d="M10 6.500h5" stroke="#a09020" />
          <path d="M10 13l5 2-5 3z" fill="#900" stroke="none" />
        </Icon>
      </button>
    </div>
    <div className="flex min-h-0 flex-1 border-t border-white bg-[#768491]">
      <div className="flex min-h-0 flex-1 flex-col gap-[3px] overflow-hidden pt-0.5 pr-0.5 pl-px">
        <ToolSection title="Snap Modes" tools={snapTools} />
        <ToolSection title="Line" tools={lineTools} />
        <ToolSection title="Circle/Ellipse" tools={circleTools} />
        <ToolSection title="Arc" />
        <ToolSection title="Curve" />
        <ToolSection title="Double Line" />
      </div>
      <div className="flex w-[15px] shrink-0 flex-col bg-[#6f6f6f]">
        <ScrollButton label="Scroll palette up" d={UP} className="h-[17px]" />
        <div className="h-[222px] border border-[#404040] bg-[#555555]" />
        <ScrollButton label="Scroll palette down" d={DOWN} className="mt-auto h-[17px]" />
      </div>
    </div>
    <div className="h-1 shrink-0 border-t-2 border-b-2 border-t-[#f0f0f0] border-b-[#8fb0e4]" />
    <div className="flex h-7 shrink-0 items-start gap-1.5 pl-0.5">
      <button className="flex h-[25px] w-[61px] items-center gap-1 rounded-b-sm bg-[#8fb0e4] pl-[5px] font-bold text-black">
        <Icon>
          <rect x=".5" y="1" width="19" height="18" fill="#777" stroke="#fff" />
          <path d="M1 2.5h18" stroke={BLUE} strokeWidth="3" />
          <path d="M3 6l5 5M6 5l2 5M16 6l-4 5M14 6l3 2" stroke="#ddd" strokeWidth="1.800" />
          <path d="M6 13h4v5H6zM12 13h1v5h-1z" fill="#f01010" stroke="#f01010" />
        </Icon>
        Tools
      </button>
      <button className="flex h-[25px] items-center gap-1 whitespace-nowrap">
        <Icon>
          <rect x=".5" y="1" width="19" height="18" fill="#777" stroke="#fff" />
          <path d="M1 2.5h18" stroke={BLUE} strokeWidth="3" />
          <ellipse cx="9" cy="14.500" rx="6" ry="2.500" fill="#ccc" stroke="none" />
          <path d="M6 8c0-2 8-2 8 0v3c0 4-7 4-7 0zM14 8c3-1 3 3 0 4" fill="#f6e820" stroke="#d8c818" />
          <circle cx="9" cy="9" r="1.500" fill="#fffbb0" stroke="none" />
        </Icon>
        Advanced Rendering Styles
      </button>
    </div>
  </aside>
);

/* ---------- bottom bars ---------- */

const Padlock = () => (
  <Icon size={9} box={9} className="text-[#c4c4c4]">
    <rect x="1" y="5" width="5" height="3.5" fill="currentColor" /><path d="M4.5 5V1.5h3V4" />
  </Icon>
);

const InspectorBar = () => (
  <div className="flex h-[41px] shrink-0 items-center border-t border-l border-[#868686] bg-[#4a4a4a] pl-1">
    <Grip />
    <button aria-label="Wizard" className="ml-1">
      <Icon size={24} box={24}>
        <path d="M3 9v5l5 6h8" stroke="#f03010" strokeWidth="1.800" />
        <Dot x={3} y={12} c="#f03010" s={4} /><Dot x={8} y={20} c="#f03010" s={4} />
        <path d="M10 6l11 10" stroke="#222" strokeWidth="2.500" /><path d="M9 5l11 10" stroke="#aaa" /><path d="M9 5l4 4" stroke="#f4f020" strokeWidth="2" />
        <path d="M12 2.500h2M18 1.500h2M16 6.500h2M21 7.500h2" stroke="#f6f6c0" strokeWidth="3" />
      </Icon>
    </button>
    <button aria-label="Cancel" className="ml-1.5 text-[#a2a2a2]">
      <Icon size={20} box={20}><path d="M1.5 2.5l17 16M18 2l-16 16" strokeWidth="2.2" /></Icon>
    </button>
    <button aria-label="Properties" className="ml-[7px]"><TableIcon /></button>
    <div className="ml-1.5"><Divider /></div>
    <div className="ml-0.5 flex h-9 gap-1 bg-[#555555] px-[3px] text-white">
      <label className="flex w-[52px] flex-col">
        <span className="flex h-4 items-center gap-px"><Padlock />Length</span>
        <input defaultValue="0 in" className="h-5 w-full border-2 border-[#a2a2a2] bg-[#292929] pl-0.5 text-[11px] outline-none" />
      </label>
      <div className="flex w-[52px] flex-col">
        <label htmlFor="angle" className="flex h-4 items-center gap-px"><Padlock />Angle</label>
        <div className="flex h-5 border-2 border-[#a2a2a2] bg-[#292929]">
          <input id="angle" defaultValue="0" className="w-8 min-w-0 pl-0.5 text-[11px] outline-none" />
          <div className="flex flex-1 flex-col">
            <ScrollButton label="Increase angle" d={UP} className="h-2" />
            <ScrollButton label="Decrease angle" d={DOWN} className="h-2" />
          </div>
        </div>
      </div>
    </div>
  </div>
);

const coordinates = [
  { axis: 'X', value: '4.327506 in', locked: false },
  { axis: 'Y', value: '5.099789 in', locked: false },
  { axis: 'Z', value: '0 in', locked: true },
];

const StatusBar = () => (
  <footer className="flex h-[26px] shrink-0 items-center border-t border-[#404040] bg-[#555555] pr-[14px] pl-2 text-[11px]">
    <p className="pb-1">Define the start point of the line</p>
    <div className="ml-auto flex items-center">
      <button>SNAP</button>
      <button className="ml-2">GEO</button>
      <div className="ml-4 flex gap-2">
        {coordinates.map((c) => (
          <label key={c.axis} className={`flex items-center gap-0.5 ${c.locked ? 'text-[#868686]' : ''}`}>
            <span className="flex w-[9px] flex-col items-center text-[8px] leading-[9px]">
              <span className={`size-2 border ${c.locked ? 'border-[#868686]' : 'border-white'}`} />
              {c.axis}
            </span>
            <input
              defaultValue={c.value}
              disabled={c.locked}
              className="h-[19px] w-[73px] border border-[#a2a2a2] bg-[#292929] pl-[3px] outline-none"
            />
          </label>
        ))}
      </div>
      <span className="w-14 pb-1.5 pl-[9px]">48%</span>
      <span className="w-[51px] pb-1.5 text-right whitespace-nowrap">9:03 PM</span>
    </div>
  </footer>
);

export default function App() {
  return (
    <div className="flex min-h-screen w-full flex-col overflow-hidden bg-[#2e2e2e] font-['Open_Sans','Noto_Sans',sans-serif] text-[12px] leading-4 text-white">
      <MenuBar />
      <Ribbon />
      <div className="h-0.5 shrink-0 bg-[#2e2e2e]" />
      <PropertyBar />
      <div className="flex min-h-[438px] flex-1">
        <DrawingArea />
        <ToolsPanel />
      </div>
      <InspectorBar />
      <StatusBar />
    </div>
  );
}
